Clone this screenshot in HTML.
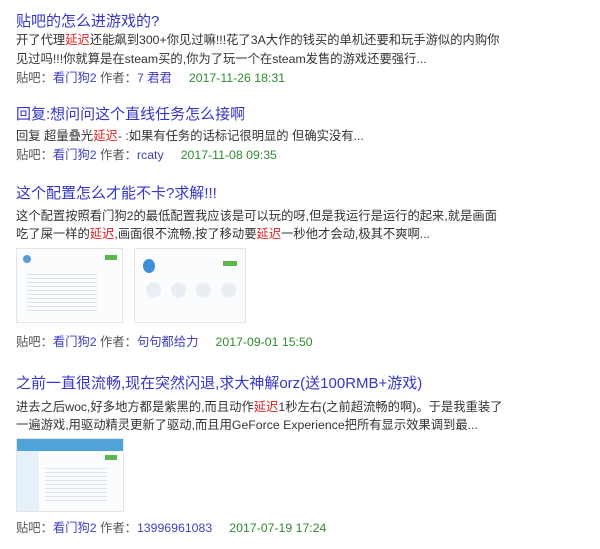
<!DOCTYPE html><html><head><meta charset="utf-8"><style>
body{margin:0;width:600px;height:549px;background:#fff;position:relative;overflow:hidden;font-family:"Liberation Sans","Noto Sans CJK SC",sans-serif;}
.a{position:absolute;left:16px;white-space:nowrap;}
.t{font-size:15px;color:#3636c8;}
.b{font-size:12.3px;color:#333;}
.r{color:#e02020}
.m{font-size:12.3px;color:#555}
.l{color:#3f3fbf}
.g{color:#2f8a2f}
.img{position:absolute;border:1px solid #e4e4e4;background:#fafcfd;}
</style></head><body>
<div class="a t" style="top:10px">贴吧的怎么进游戏的?</div>
<div class="a b" style="top:30px">开了代理<span class="r">延迟</span>还能飙到300+你见过嘛!!!花了3A大作的钱买的单机还要和玩手游似的内购你</div>
<div class="a b" style="top:49px">见过吗!!!你就算是在steam买的,你为了玩一个在steam发售的游戏还要强行...</div>
<div class="a m" style="top:68px">贴吧：<span class="l">看门狗2</span> 作者：<span class="l">7 君君</span>&nbsp;&nbsp;&nbsp;&nbsp;&nbsp;<span class="g">2017-11-26 18:31</span></div>

<div class="a t" style="top:103px">回复:想问问这个直线任务怎么接啊</div>
<div class="a b" style="top:126px">回复 超量叠光<span class="r">延迟</span>- :如果有任务的话标记很明显的 但确实没有...</div>
<div class="a m" style="top:145px">贴吧：<span class="l">看门狗2</span> 作者：<span class="l">rcaty</span>&nbsp;&nbsp;&nbsp;&nbsp;&nbsp;<span class="g">2017-11-08 09:35</span></div>

<div class="a t" style="top:182px">这个配置怎么才能不卡?求解!!!</div>
<div class="a b" style="top:206px">这个配置按照看门狗2的最低配置我应该是可以玩的呀,但是我运行是运行的起来,就是画面</div>
<div class="a b" style="top:224px">吃了屎一样的<span class="r">延迟</span>,画面很不流畅,按了移动要<span class="r">延迟</span>一秒他才会动,极其不爽啊...</div>
<div class="img" style="left:16px;top:248px;width:105px;height:73px;">
<div style="position:absolute;left:88px;top:6px;width:12px;height:5px;background:#5ab84a"></div>
<div style="position:absolute;left:6px;top:6px;width:8px;height:8px;border-radius:50%;background:#5a9bd8"></div>
<div style="position:absolute;left:10px;top:22px;width:70px;height:40px;background:repeating-linear-gradient(#fafcfd 0 3px,#dde3ea 3px 4px)"></div></div>
<div class="img" style="left:134px;top:248px;width:110px;height:73px;">
<div style="position:absolute;left:8px;top:10px;width:12px;height:14px;border-radius:50%;background:#3f8fd8"></div>
<div style="position:absolute;left:88px;top:12px;width:14px;height:5px;background:#5ab84a"></div>
<div style="position:absolute;left:6px;top:32px;width:98px;height:18px;background:radial-gradient(circle,#e8eef3 0 7px,transparent 8px) 0 0/25px 18px repeat-x"></div></div>
<div class="a m" style="top:332px">贴吧：<span class="l">看门狗2</span> 作者：<span class="l">句句都给力</span>&nbsp;&nbsp;&nbsp;&nbsp;&nbsp;<span class="g">2017-09-01 15:50</span></div>

<div class="a t" style="top:372px">之前一直很流畅,现在突然闪退,求大神解orz(送100RMB+游戏)</div>
<div class="a b" style="top:397px">进去之后woc,好多地方都是紫黑的,而且动作<span class="r">延迟</span>1秒左右(之前超流畅的啊)。于是我重装了</div>
<div class="a b" style="top:415px">一遍游戏,用驱动精灵更新了驱动,而且用GeForce Experience把所有显示效果调到最...</div>
<div class="img" style="left:16px;top:438px;width:106px;height:72px;">
<div style="position:absolute;left:0;top:0;width:106px;height:12px;background:#4fa3d8"></div>
<div style="position:absolute;left:0;top:12px;width:22px;height:60px;background:#e6f0f8"></div>
<div style="position:absolute;left:88px;top:16px;width:12px;height:5px;background:#5ab84a"></div>
<div style="position:absolute;left:28px;top:26px;width:62px;height:36px;background:repeating-linear-gradient(#fafcfd 0 3px,#dde3ea 3px 4px)"></div></div>
<div class="a m" style="top:518px">贴吧：<span class="l">看门狗2</span> 作者：<span class="l">13996961083</span>&nbsp;&nbsp;&nbsp;&nbsp;&nbsp;<span class="g">2017-07-19 17:24</span></div>
</body></html>
